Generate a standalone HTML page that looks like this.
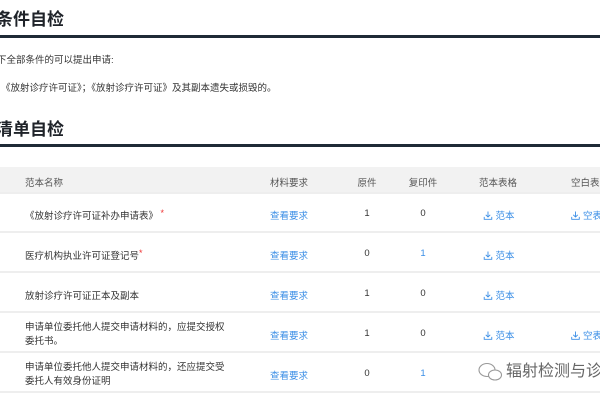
<!DOCTYPE html><html><head><meta charset="utf-8"><style>
body{margin:0;width:600px;height:400px;overflow:hidden;background:#fff;font-family:"Liberation Sans","Noto Sans CJK SC",sans-serif;color:#333;position:relative}
.a{position:absolute;white-space:nowrap}
.h{font-size:17px;font-weight:bold;color:#1f2329;left:-4px}
.line{position:absolute;left:0;width:600px;height:3px;background:#1f2a36}
.t{font-size:9.5px;color:#333}
.hd{position:absolute;left:0;top:167px;width:600px;height:26px;background:#f2f2f2}
.row{position:absolute;left:0;width:600px;height:2px;background:#eeeeee}
.c{position:absolute;font-size:9.5px;transform:translateX(-50%);white-space:nowrap}
.b{color:#3a8ee6}
.st{color:#e33;font-size:9px;vertical-align:top}
.ic{width:9px;height:9px;vertical-align:-1px;margin-right:3px}
</style></head><body>
<svg width="0" height="0" style="position:absolute"><defs><symbol id="dl" viewBox="0 0 10 10"><path d="M5 0.5V6.5M2.5 4.2L5 6.7L7.5 4.2M0.8 6.5V9.2H9.2V6.5" fill="none" stroke="#3a8ee6" stroke-width="1"/></symbol></defs></svg>
<div class="a h" style="top:5px">条件自检</div>
<div class="line" style="top:35px"></div>
<div class="a t" style="left:-3px;top:52px">下全部条件的可以提出申请:</div>
<div class="a t" style="left:1px;top:80px">《放射诊疗许可证》；《放射诊疗许可证》及其副本遗失或损毁的。</div>
<div class="a h" style="top:115px">清单自检</div>
<div class="line" style="top:144px"></div>
<div class="hd"></div>
<div class="a t" style="left:25px;top:175px;color:#555">范本名称</div>
<div class="c t" style="left:289px;top:175px;color:#555">材料要求</div>
<div class="c t" style="left:367px;top:175px;color:#555">原件</div>
<div class="c t" style="left:423px;top:175px;color:#555">复印件</div>
<div class="c t" style="left:498px;top:175px;color:#555">范本表格</div>
<div class="a t" style="left:571px;top:175px;color:#555">空白表</div>
<div class="row" style="top:192px"></div>
<div class="row" style="top:231px"></div>
<div class="row" style="top:271px"></div>
<div class="row" style="top:311px"></div>
<div class="row" style="top:351px"></div>
<div class="row" style="top:391px"></div>

<div class="a t" style="left:25px;top:208px">《放射诊疗许可证补办申请表》<span class="st"> *</span></div>
<div class="a t" style="left:25px;top:248px">医疗机构执业许可证登记号<span class="st">*</span></div>
<div class="a t" style="left:25px;top:288px">放射诊疗许可证正本及副本</div>
<div class="a t" style="left:25px;top:321px;line-height:14px">申请单位委托他人提交申请材料的，应提交授权<br>委托书。</div>
<div class="a t" style="left:25px;top:361px;line-height:14px">申请单位委托他人提交申请材料的，还应提交受<br>委托人有效身份证明</div>

<div class="c t b" style="left:289px;top:208px">查看要求</div>
<div class="c t b" style="left:289px;top:248px">查看要求</div>
<div class="c t b" style="left:289px;top:288px">查看要求</div>
<div class="c t b" style="left:289px;top:328px">查看要求</div>
<div class="c t b" style="left:289px;top:368px">查看要求</div>

<div class="c t" style="left:367px;top:208px">1</div><div class="c t" style="left:423px;top:208px">0</div>
<div class="c t" style="left:367px;top:248px">0</div><div class="c t b" style="left:423px;top:248px">1</div>
<div class="c t" style="left:367px;top:288px">1</div><div class="c t" style="left:423px;top:288px">0</div>
<div class="c t" style="left:367px;top:328px">1</div><div class="c t" style="left:423px;top:328px">0</div>
<div class="c t" style="left:367px;top:368px">0</div><div class="c t b" style="left:423px;top:368px">1</div>

<div class="c t b" style="left:499px;top:208px"><svg class="ic"><use href="#dl"/></svg>范本</div>
<div class="c t b" style="left:499px;top:248px"><svg class="ic"><use href="#dl"/></svg>范本</div>
<div class="c t b" style="left:499px;top:288px"><svg class="ic"><use href="#dl"/></svg>范本</div>
<div class="c t b" style="left:499px;top:328px"><svg class="ic"><use href="#dl"/></svg>范本</div>
<div class="a t b" style="left:571px;top:208px"><svg class="ic"><use href="#dl"/></svg>空表</div>
<div class="a t b" style="left:571px;top:328px"><svg class="ic"><use href="#dl"/></svg>空表</div>

<div class="a" style="left:476px;top:357px;color:#666">
<svg width="30" height="22" viewBox="0 0 30 22" style="vertical-align:middle"><ellipse cx="11" cy="9" rx="8" ry="6.5" fill="none" stroke="#999" stroke-width="1.1"/><ellipse cx="19" cy="14" rx="6.5" ry="5" fill="#fff" stroke="#999" stroke-width="1.1"/></svg><span style="font-size:16px">辐射检测与诊</span></div>
</body></html>
